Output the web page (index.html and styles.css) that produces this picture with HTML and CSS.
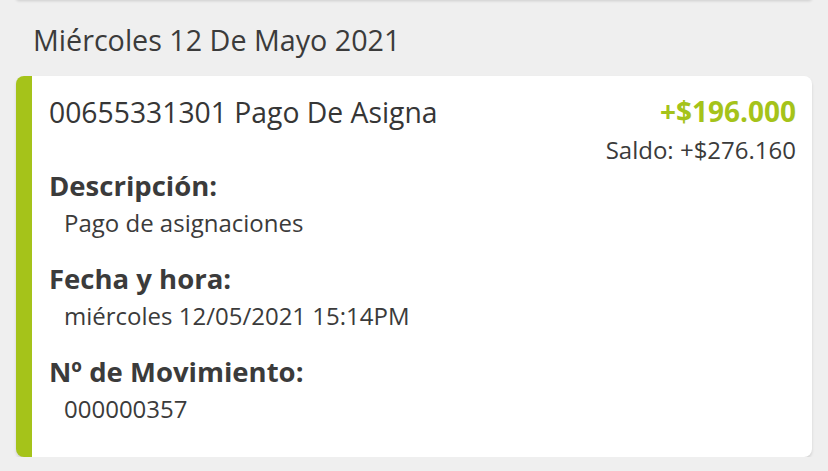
FILE: index.html
```html
<!DOCTYPE html>
<html lang="es">
	<head>
		<meta charset="utf-8">
		<meta name="viewport" content="width=device-width, initial-scale=1">
		<title>Movimientos</title>
		<link rel="stylesheet" href="styles.css">
	</head>
	<body>
		<div class="prev-card"></div>
		<h2 class="day">Miércoles 12 De Mayo 2021</h2>
		<div class="card">
			<div class="card-top">
				<div class="title">00655331301 Pago De Asigna</div>
				<div class="amounts">
					<div class="amount">+$196.000</div>
					<div class="balance">Saldo: +$276.160</div>
				</div>
			</div>
			<div class="field">
				<div class="label">Descripción:</div>
				<div class="value">Pago de asignaciones</div>
			</div>
			<div class="field">
				<div class="label">Fecha y hora:</div>
				<div class="value">miércoles 12/05/2021 15:14PM</div>
			</div>
			<div class="field">
				<div class="label">Nº de Movimiento:</div>
				<div class="value">000000357</div>
			</div>
		</div>
	</body>
</html>
```

FILE: styles.css
```css
body {
	margin: 0;
	background: #efefef;
	font-family: "Open Sans", "Noto Sans", sans-serif;
	color: #3b3b3b;
	padding: 0 16px;
}

/* bottom of the card above, cut by the top of the window */
.prev-card {
	height: 3px;
	margin-top: -3px;
	background: #fff;
	border-radius: 0 0 8px 8px;
	box-shadow: 0 1px 3px rgba(0, 0, 0, 0.15);
}

.day {
	margin: 0;
	padding: 22px 0 0 17px;
	height: 54px;
	font-size: 28.7px;
	font-weight: 400;
	line-height: 36px;
}

.card {
	background: #fff;
	border-left: 16px solid #a5c31a;
	border-radius: 8px;
	box-shadow: 0 2px 3px rgba(0, 0, 0, 0.13);
	padding: 18px 16px 29px 17px;
}

.card-top {
	display: flex;
	justify-content: space-between;
	align-items: flex-start;
}

.title {
	font-size: 28.3px;
	line-height: 36px;
	color: #363636;
}

.amounts {
	text-align: right;
}

.amount {
	color: #a5c31a;
	font-weight: 700;
	font-size: 28px;
	line-height: 34px;
}

.balance {
	font-size: 24px;
	line-height: 32px;
	margin-top: 6px;
}

.field {
	margin-top: 2px;
}

.field + .field {
	margin-top: 19px;
}

.label {
	font-size: 27.5px;
	font-weight: 700;
	line-height: 36px;
}

.value {
	font-size: 24px;
	line-height: 38px;
	padding-left: 15px;
}
```
